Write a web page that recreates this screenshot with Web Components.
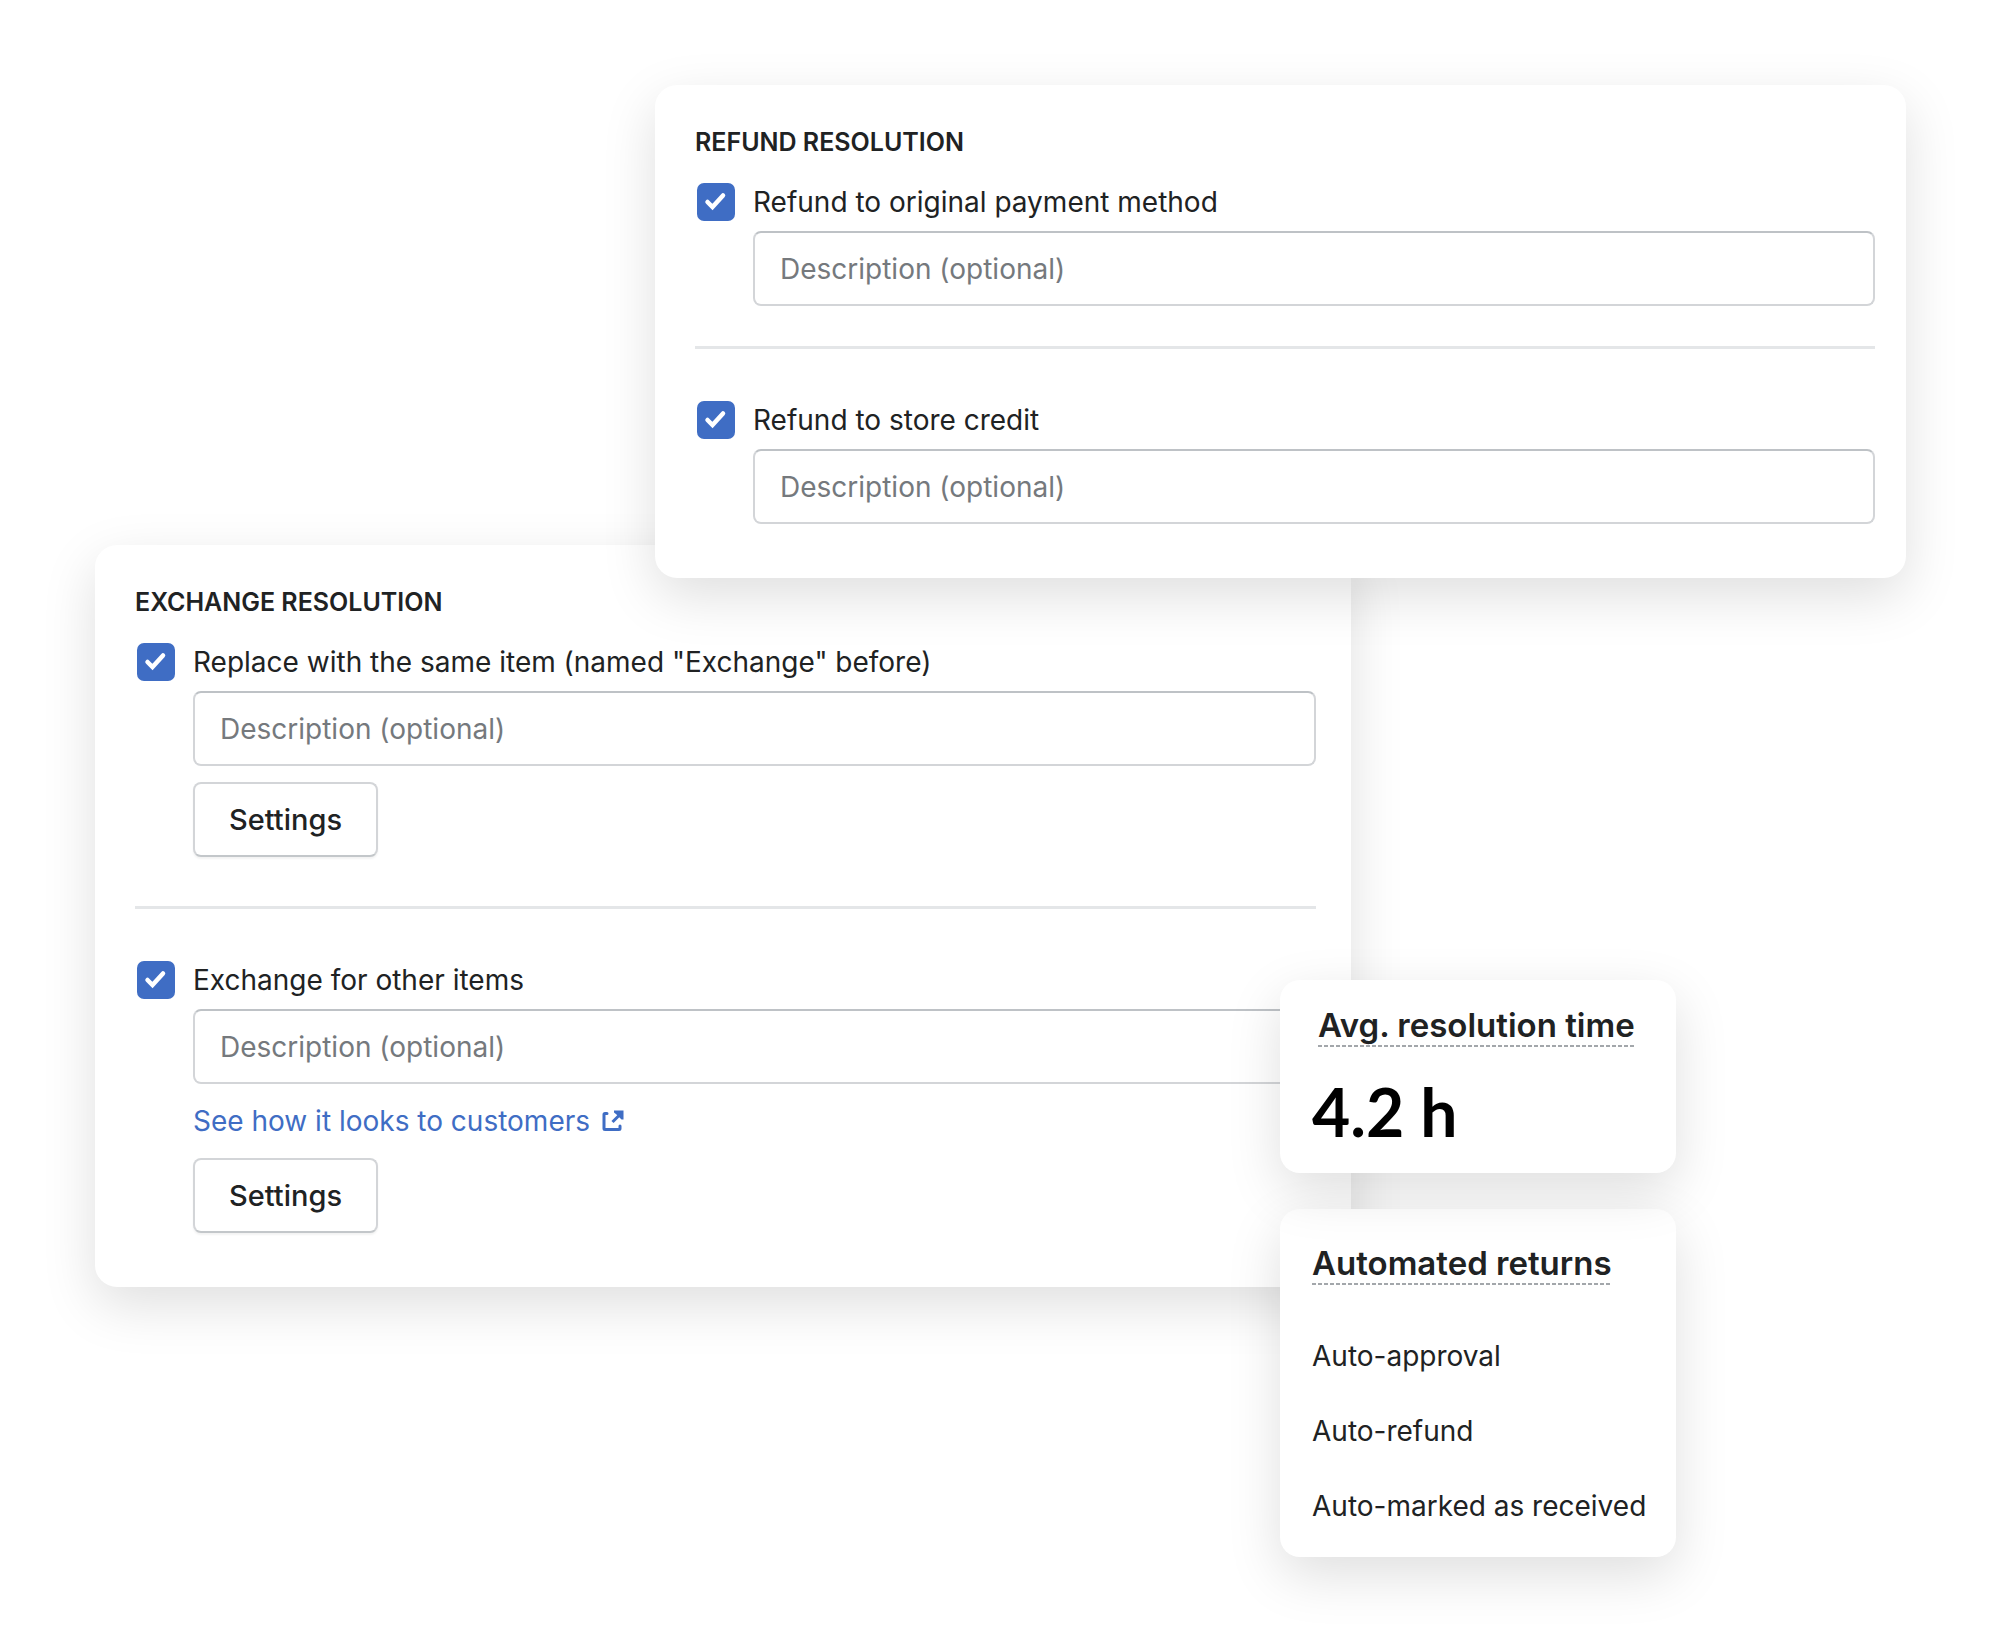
<!DOCTYPE html>
<html lang="en">
<head>
<meta charset="utf-8">
<meta name="viewport" content="width=device-width, initial-scale=1">
<title>Return resolutions</title>
<style>
  body { margin: 0; background: #fff; color: #202223; font-family: Inter, "Liberation Sans", sans-serif; }
  .exchange { --divider-gap: 49px; --card-end: 35px; }
</style>
</head>
<body>
<resolution-board>
  <resolution-card slot="refund" heading="Refund resolution">
    <resolution-option label="Refund to original payment method"></resolution-option>
    <resolution-option label="Refund to store credit"></resolution-option>
  </resolution-card>
  <resolution-card slot="exchange" class="exchange" heading="Exchange resolution">
    <resolution-option label='Replace with the same item (named "Exchange" before)'>
      <settings-button>Settings</settings-button>
    </resolution-option>
    <resolution-option label="Exchange for other items">
      <external-link>See how it looks to customers</external-link>
      <settings-button>Settings</settings-button>
    </resolution-option>
  </resolution-card>
  <stat-card slot="stats" heading="Avg. resolution time" value="4.2 h"></stat-card>
  <stat-list slot="stats" heading="Automated returns" items="Auto-approval|Auto-refund|Auto-marked as received"></stat-list>
</resolution-board>

<script>
const surface = `
  :host { display: block; box-sizing: border-box; background: #fff; box-shadow: 0 18px 54px rgba(0,0,0,.13); }
  h2, p, ul { margin: 0; padding: 0; }
`;
const dashed = `
  h2 {
    width: fit-content; font-size: 33px; font-weight: 600; line-height: 40px; padding-bottom: 2px;
    background: repeating-linear-gradient(90deg, #a3a7ab 0 4px, transparent 4px 6px) left bottom / 100% 2px no-repeat;
  }
`;
function attach(el, html) {
  el.attachShadow({ mode: "open" }).innerHTML = html;
  return el.shadowRoot;
}

customElements.define("resolution-board", class extends HTMLElement {
  connectedCallback() {
    attach(this, `
      <style>
        :host {
          display: grid; padding: 85px 0 72px;
          grid-template-columns: 95fr 560fr 625fr 71fr 325fr 230fr 94fr;
        }
        .refund { grid-area: 1 / 3 / 2 / 7; z-index: 1; }
        .exchange { grid-area: 2 / 2 / 3 / 5; margin-top: -33px; align-self: start; }
        .stats { grid-area: 2 / 4 / 3 / 6; margin-top: 402px; display: flex; flex-direction: column; gap: 36px; z-index: 2; }
      </style>
      <div class="refund"><slot name="refund"></slot></div>
      <div class="exchange"><slot name="exchange"></slot></div>
      <div class="stats"><slot name="stats"></slot></div>`);
  }
});

customElements.define("resolution-card", class extends HTMLElement {
  connectedCallback() {
    attach(this, `
      <style>
        ${surface}
        :host { border-radius: 22px; padding: 40px var(--card-end, 31px) 54px 40px; }
        h2 { font-size: 25px; font-weight: 600; line-height: 34px; margin-bottom: 24px; text-transform: uppercase; }
        ::slotted(:not(:first-of-type)) { border-top: 3px solid #e4e6e8; margin-top: var(--divider-gap, 40px); padding-top: 52px; }
      </style>
      <h2>${this.getAttribute("heading")}</h2>
      <slot></slot>`);
  }
});

customElements.define("resolution-option", class extends HTMLElement {
  connectedCallback() {
    const label = this.getAttribute("label");
    const root = attach(this, `
      <style>
        :host { display: block; }
        .row { display: flex; gap: 18px; padding-left: 2px; align-items: center; }
        .box { display: grid; width: 38px; height: 38px; }
        .box > * { grid-area: 1 / 1; width: 38px; height: 38px; margin: 0; }
        .box input { appearance: none; background: #3f6dc4; border-radius: 7px; }
        .box input:not(:checked) { background: #fff; border: 2px solid #8c9196; }
        .box input:not(:checked) + svg { display: none; }
        svg { pointer-events: none; }
        label { font-size: 28px; line-height: 38px; }
        .body { display: flex; flex-direction: column; align-items: flex-start; gap: 16px; padding: 10px 0 0 58px; }
        .text {
          box-sizing: border-box; width: 100%; height: 75px; padding: 0 25px; margin: 0;
          border: 2px solid #d3d5d8; border-top-color: #bec2c6; border-radius: 8px;
          background: #fff; color: inherit; font: 28px/38px Inter, "Liberation Sans", sans-serif;
        }
        .text::placeholder { color: #75797d; opacity: 1; }
      </style>
      <div class="row">
        <span class="box">
          <input type="checkbox" id="pick" checked>
          <svg viewBox="0 0 38 38" fill="none" stroke="#fff" stroke-width="4.500" stroke-linecap="round" stroke-linejoin="miter" aria-hidden="true"><path d="M10.500 19L15.500 24L26 12.500"/></svg>
        </span>
        <label for="pick"></label>
      </div>
      <div class="body">
        <input class="text" type="text" placeholder="Description (optional)" aria-label="Description">
        <slot></slot>
      </div>`);
    root.querySelector("label").textContent = label;
  }
});

customElements.define("settings-button", class extends HTMLElement {
  connectedCallback() {
    attach(this, `
      <style>
        :host { display: block; }
        button {
          height: 75px; padding: 0 34px; border: 2px solid #d3d5d8; border-bottom-color: #c3c7ca; border-radius: 8px;
          background: #fff; color: #202223; box-shadow: 0 2px 2px rgba(0,0,0,.05);
          font: 500 29px/38px Inter, "Liberation Sans", sans-serif; display: block;
        }
      </style>
      <button type="button"><slot></slot></button>`);
  }
});

customElements.define("external-link", class extends HTMLElement {
  connectedCallback() {
    attach(this, `
      <style>
        :host { display: block; padding: 2px 0; }
        a { display: flex; align-items: center; gap: 12px; color: #3f6dc4; font-size: 28px; line-height: 38px; text-decoration: none; }
        svg { width: 22px; height: 22px; }
      </style>
      <a href="#preview"><slot></slot>
        <svg viewBox="0 0 22 22" fill="none" stroke="currentColor" stroke-width="3" aria-hidden="true">
          <path d="M5 3.500H3Q2 3.500 2 4.500V18.500Q2 19.500 3 19.500H17Q18 19.500 18 18.500V16" stroke-linecap="round" stroke-linejoin="round"/>
          <path d="M10.500 12L18.500 4"/>
          <path d="M12 0.500H21.500V9.500H19.500L17.500 7.500L14.500 4.500L12 2.500Z" fill="currentColor" stroke="none"/>
        </svg>
      </a>`);
  }
});

customElements.define("stat-card", class extends HTMLElement {
  connectedCallback() {
    attach(this, `
      <style>
        ${surface}${dashed}
        :host { border-radius: 20px; padding: 25px 32px 23px; z-index: 1; }
        h2 { margin-left: 6px; }
        p { color: #000; font: 700 66px/76px Lato, Inter, sans-serif; margin-top: 27px; }
      </style>
      <h2>${this.getAttribute("heading")}</h2>
      <p>${this.getAttribute("value")}</p>`);
  }
});

customElements.define("stat-list", class extends HTMLElement {
  connectedCallback() {
    attach(this, `
      <style>
        ${surface}${dashed}
        :host { border-radius: 20px; padding: 34px 24px 32px 32px; }
        ul { list-style: none; display: flex; flex-direction: column; gap: 37px; margin-top: 52px; }
        li { font-size: 28px; line-height: 38px; white-space: nowrap; }
      </style>
      <h2>${this.getAttribute("heading")}</h2>
      <ul>${this.getAttribute("items").split("|").map(t => `<li>${t}</li>`).join("")}</ul>`);
  }
});
</script>
</body>
</html>
